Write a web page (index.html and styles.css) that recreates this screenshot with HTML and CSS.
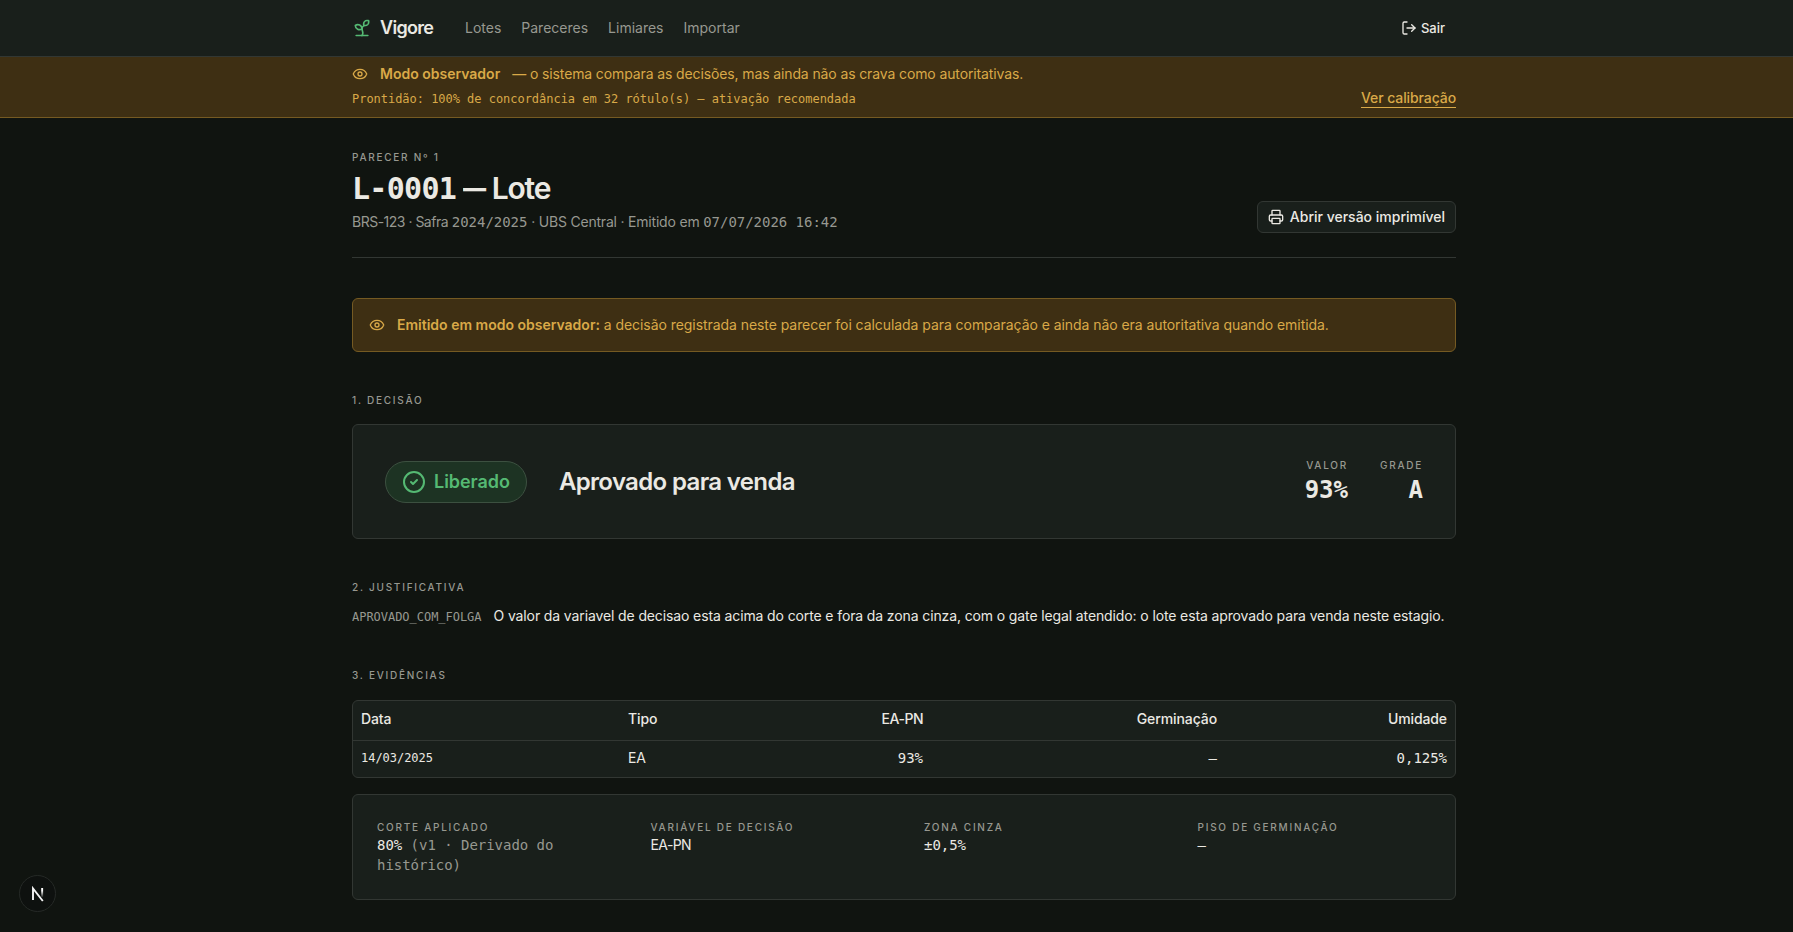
FILE: index.html
```html
<!DOCTYPE html>
<html lang="pt-br">
<head>
    <meta charset="UTF-8">
    <meta name="viewport" content="width=device-width, initial-scale=1.0">
    <title>Vigore - Parecer nº 1</title>
    <link rel="stylesheet" href="styles.css">
</head>
<body>
    <header class="topbar">
        <div class="container topbar-row">
            <a class="brand" href="#">
                <svg class="icon-logo" viewBox="0 0 24 24"><path d="M14 9.536V7a4 4 0 0 1 4-4h1.5a.5.5 0 0 1 .5.5V5a4 4 0 0 1-4 4 4 4 0 0 0-4 4c0 2 1 3 1 5a5 5 0 0 1-1 3"/><path d="M4 9a5 5 0 0 1 8 4 5 5 0 0 1-8-4"/><path d="M5 21h14"/></svg>
                <span>Vigore</span>
            </a>
            <nav class="menu">
                <a href="#">Lotes</a>
                <a href="#">Pareceres</a>
                <a href="#">Limiares</a>
                <a href="#">Importar</a>
            </nav>
            <button class="logout">
                <svg class="icon" viewBox="0 0 24 24"><path d="m16 17 5-5-5-5"/><path d="M21 12H9"/><path d="M9 21H5a2 2 0 0 1-2-2V5a2 2 0 0 1 2-2h4"/></svg>
                Sair
            </button>
        </div>
    </header>

    <div class="banner">
        <div class="container">
            <div class="banner-line">
                <svg class="icon" viewBox="0 0 24 24"><path d="M2.062 12.348a1 1 0 0 1 0-.696 10.75 10.75 0 0 1 19.876 0 1 1 0 0 1 0 .696 10.75 10.75 0 0 1-19.876 0"/><circle cx="12" cy="12" r="3"/></svg>
                <strong>Modo observador</strong>
                <span class="banner-text">— o sistema compara as decisões, mas ainda não as crava como autoritativas.</span>
            </div>
            <div class="banner-line">
                <span class="mono small readiness">Prontidão: 100% de concordância em 32 rótulo(s) — ativação recomendada</span>
                <a class="banner-link" href="#">Ver calibração</a>
            </div>
        </div>
    </div>

    <main class="container">
        <div class="page-head">
            <div>
                <p class="eyebrow">PARECER Nº 1</p>
                <h1><span class="mono code">L-0001</span> <span class="dash">—</span> Lote</h1>
                <p class="meta"><span class="variety">BRS-123 · Safra</span> <span class="mono">2024/2025</span> <span class="place">· UBS Central · Emitido em</span> <span class="mono">07/07/2026 16:42</span></p>
            </div>
            <a class="print" href="#">
                <svg class="icon" viewBox="0 0 24 24"><path d="M6 18H4a2 2 0 0 1-2-2v-5a2 2 0 0 1 2-2h16a2 2 0 0 1 2 2v5a2 2 0 0 1-2 2h-2"/><path d="M6 9V3a1 1 0 0 1 1-1h10a1 1 0 0 1 1 1v6"/><rect x="6" y="14" width="12" height="8" rx="1"/></svg>
                Abrir versão imprimível
            </a>
        </div>

        <div class="notice">
            <svg class="icon" viewBox="0 0 24 24"><path d="M2.062 12.348a1 1 0 0 1 0-.696 10.75 10.75 0 0 1 19.876 0 1 1 0 0 1 0 .696 10.75 10.75 0 0 1-19.876 0"/><circle cx="12" cy="12" r="3"/></svg>
            <p><strong>Emitido em modo observador:</strong> a decisão registrada neste parecer foi calculada para comparação e ainda não era autoritativa quando emitida.</p>
        </div>

        <section>
            <h2 class="eyebrow">1. DECISÃO</h2>
            <div class="card decision">
                <span class="badge">
                    <svg class="icon-check" viewBox="0 0 24 24"><circle cx="12" cy="12" r="10"/><path d="m9 12 2 2 4-4"/></svg>
                    Liberado
                </span>
                <span class="verdict">Aprovado para venda</span>
                <div class="scores">
                    <div>
                        <div class="eyebrow">VALOR</div>
                        <div class="mono score">93%</div>
                    </div>
                    <div>
                        <div class="eyebrow">GRADE</div>
                        <div class="mono score">A</div>
                    </div>
                </div>
            </div>
        </section>

        <section>
            <h2 class="eyebrow">2. JUSTIFICATIVA</h2>
            <p class="reason"><span class="mono small reason-code">APROVADO_COM_FOLGA</span><span>O valor da variavel de decisao esta acima do corte e fora da zona cinza, com o gate legal atendido: o lote esta aprovado para venda neste estagio.</span></p>
        </section>

        <section>
            <h2 class="eyebrow">3. EVIDÊNCIAS</h2>
            <div class="card evidence">
                <table>
                    <thead>
                        <tr>
                            <th class="col-date">Data</th>
                            <th class="col-type">Tipo</th>
                            <th class="col-ea num">EA-PN</th>
                            <th class="col-germ num">Germinação</th>
                            <th class="num">Umidade</th>
                        </tr>
                    </thead>
                    <tbody>
                        <tr>
                            <td class="mono small">14/03/2025</td>
                            <td>EA</td>
                            <td class="mono num">93%</td>
                            <td class="mono num">—</td>
                            <td class="mono num">0,125%</td>
                        </tr>
                    </tbody>
                </table>
            </div>
            <dl class="card params">
                <div>
                    <dt class="eyebrow">CORTE APLICADO</dt>
                    <dd class="mono">80% <span class="muted">(v1 · Derivado do histórico)</span></dd>
                </div>
                <div>
                    <dt class="eyebrow">VARIÁVEL DE DECISÃO</dt>
                    <dd class="tight">EA-PN</dd>
                </div>
                <div>
                    <dt class="eyebrow">ZONA CINZA</dt>
                    <dd class="mono">±0,5%</dd>
                </div>
                <div>
                    <dt class="eyebrow">PISO DE GERMINAÇÃO</dt>
                    <dd class="mono">—</dd>
                </div>
            </dl>
        </section>
    </main>

    <button class="devtools" aria-label="Dev tools">
        <svg viewBox="0 0 16 16">
            <defs>
                <linearGradient id="fade" x1="0" y1="0" x2="0" y2="1">
                    <stop offset="0.3" stop-color="#fff"/>
                    <stop offset="1" stop-color="#fff" stop-opacity="0.1"/>
                </linearGradient>
            </defs>
            <path d="M3 14V2.5L12.8 15" fill="none" stroke="#f4f4f4" stroke-width="1.9"/>
            <rect x="11.2" y="2" width="1.9" height="9" fill="url(#fade)"/>
        </svg>
    </button>
</body>
</html>
```
FILE: styles.css
```css
:root {
    --bg: #101410;
    --surface: #191f1b;
    --border: #323733;
    --text: #ebe9e3;
    --muted: #979890;
    --amber: #d9a948;
    --amber-bg: #3e2f13;
    --amber-border: #755a22;
    --green: #55b973;
    --gutter: 15px;
}

* {
    box-sizing: border-box;
}

body {
    margin: 0;
    height: 932px;
    overflow: hidden;
    background-color: var(--bg);
    color: var(--text);
    font-family: Inter, "Liberation Sans", sans-serif;
    font-size: 14px;
    line-height: 20px;
    letter-spacing: -0.1px;
}

h1, h2, p, dl, dd {
    margin: 0;
}

a {
    color: inherit;
    text-decoration: none;
}

strong {
    font-weight: 600;
    letter-spacing: 0;
}

button {
    font: inherit;
    color: inherit;
    border: none;
    background: none;
    padding: 0;
    cursor: pointer;
}

.container {
    width: 1104px;
    margin: 0 auto;
}

.topbar, .banner, main {
    padding-left: var(--gutter);
}

main.container {
    width: 1119px;
    padding-top: 31px;
}

.mono {
    font-family: "DejaVu Sans Mono", "Liberation Mono", monospace;
    letter-spacing: -0.03px;
}

.small {
    font-size: 12px;
}

.muted {
    color: var(--muted);
}

.icon, .icon-logo, .icon-check {
    width: 16px;
    height: 16px;
    flex-shrink: 0;
    fill: none;
    stroke: currentColor;
    stroke-width: 2;
    stroke-linecap: round;
    stroke-linejoin: round;
}

.eyebrow {
    font-size: 10px;
    font-weight: 500;
    line-height: 16px;
    letter-spacing: 1.75px;
    color: var(--muted);
}

/* Top bar */
.topbar {
    background-color: var(--surface);
    border-bottom: 1px solid var(--border);
}

.topbar-row {
    height: 56px;
    display: flex;
    align-items: center;
}

.brand {
    display: flex;
    align-items: center;
    gap: 8px;
    width: 81px;
    font-size: 18px;
    font-weight: 600;
    letter-spacing: -0.7px;
}

.icon-logo {
    width: 20px;
    height: 20px;
    color: var(--green);
}

.menu {
    display: flex;
    gap: 20px;
    margin-left: 32px;
    padding-bottom: 1px;
    color: var(--muted);
    letter-spacing: 0;
}

.logout {
    display: flex;
    align-items: center;
    gap: 4px;
    margin-left: auto;
    padding-right: 11px;
    font-size: 13px;
    font-weight: 500;
}

/* Observer banner */
.banner {
    height: 61px;
    padding-top: 7px;
    background-color: var(--amber-bg);
    border-bottom: 1px solid var(--amber-border);
    color: var(--amber);
}

.banner-line {
    display: flex;
    align-items: center;
    gap: 12px;
    margin-bottom: 4px;
}

.banner-text {
    letter-spacing: -0.12px;
}

.readiness {
    line-height: 18px;
    padding-top: 2px;
}

.banner-link {
    margin-left: auto;
    font-weight: 500;
    line-height: 19px;
    border-bottom: 1px solid var(--amber);
}

/* Page head */
.page-head {
    display: flex;
    justify-content: space-between;
    align-items: flex-end;
    padding-bottom: 24px;
    border-bottom: 1px solid var(--border);
}

h1 {
    margin: 5px 0;
    font-size: 30px;
    font-weight: 600;
    line-height: 36px;
    letter-spacing: -1.2px;
}

.code {
    letter-spacing: -0.7px;
}

.dash {
    display: inline-block;
    transform: scaleX(0.77);
    transform-origin: left;
    margin-right: -6px;
}

.meta {
    padding-bottom: 1px;
    color: var(--muted);
    letter-spacing: -0.2px;
}

.variety {
    letter-spacing: -0.5px;
}

.print {
    display: flex;
    align-items: center;
    gap: 6px;
    height: 32px;
    padding: 0 10px;
    border: 1px solid var(--border);
    border-radius: 6px;
    background-color: var(--surface);
    font-weight: 500;
    letter-spacing: 0;
}

/* Notice */
.notice {
    display: flex;
    align-items: center;
    gap: 12px;
    height: 54px;
    margin-top: 40px;
    padding: 0 16px;
    border: 1px solid var(--amber-border);
    border-radius: 6px;
    background-color: var(--amber-bg);
    color: var(--amber);
    letter-spacing: -0.06px;
}

.notice p {
    padding-bottom: 1px;
}

section {
    margin-top: 40px;
}

.card {
    border: 1px solid var(--border);
    border-radius: 6px;
    background-color: var(--surface);
}

/* Decision */
.decision {
    display: flex;
    align-items: center;
    gap: 32px;
    height: 115px;
    margin-top: 16px;
    padding: 0 32px;
}

.badge {
    display: flex;
    align-items: center;
    gap: 8px;
    height: 42px;
    padding: 0 16px;
    border: 1px solid #3c5040;
    border-radius: 21px;
    background-color: #1d3323;
    color: var(--green);
    font-size: 18px;
    font-weight: 600;
    letter-spacing: -0.05px;
}

.icon-check {
    width: 24px;
    height: 24px;
}

.verdict {
    font-size: 24px;
    font-weight: 600;
    letter-spacing: -0.65px;
}

.scores {
    display: flex;
    gap: 32px;
    margin-left: auto;
    text-align: right;
}

.score {
    font-size: 24px;
    font-weight: 700;
    line-height: 34px;
}

/* Reason */
.reason {
    display: flex;
    align-items: baseline;
    gap: 12px;
    height: 22px;
    margin-top: 10px;
    line-height: 22px;
    letter-spacing: -0.12px;
    white-space: nowrap;
}

.reason-code {
    color: var(--muted);
}

/* Evidence */
.evidence {
    height: 78px;
    margin-top: 17px;
}

table {
    width: 100%;
    border-collapse: collapse;
    table-layout: fixed;
}

th, td {
    height: 36px;
    padding: 0 8px;
    text-align: left;
    font-weight: 400;
}

th {
    height: 39px;
    padding-bottom: 2px;
    border-bottom: 1px solid var(--border);
    font-weight: 500;
}

.num {
    text-align: right;
}

.col-date {
    width: 267px;
}

.col-type {
    width: 137px;
}

.col-ea {
    width: 174px;
    letter-spacing: -0.5px;
}

.col-germ {
    width: 294px;
}

.params {
    display: grid;
    grid-template-columns: repeat(4, 1fr);
    gap: 40px;
    height: 106px;
    margin-top: 16px;
    padding: 24px;
}

.tight {
    letter-spacing: -0.6px;
}

.devtools {
    position: fixed;
    left: 19px;
    bottom: 20px;
    width: 37px;
    height: 37px;
    display: flex;
    align-items: center;
    justify-content: center;
    border: 1px solid #262a27;
    border-radius: 50%;
    background-color: #0e110f;
}

.devtools svg {
    width: 16px;
    height: 16px;
}
```
